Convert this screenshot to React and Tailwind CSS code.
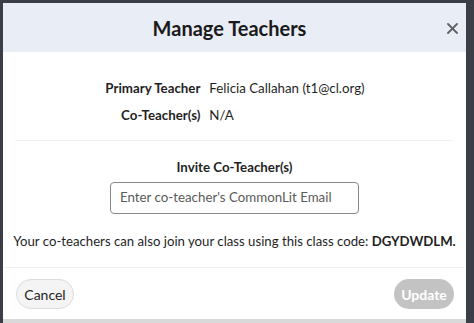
import React from "react";

export default function App() {
  return (
    <div
      className="w-[474px] h-[323px] bg-[#3b3e46] pt-[3px] pl-[3px] overflow-hidden"
      style={{ fontFamily: "Lato, 'Open Sans', sans-serif" }}
    >
      <div className="w-[463px] h-[320px] bg-white flex flex-col">
        <div className="h-[49px] bg-[#e9edf6] flex items-center justify-center relative shrink-0 pr-[10px]">
          <h1 className="text-[20px] font-bold text-[#1a1a1a] leading-none">Manage Teachers</h1>
          <svg
            className="absolute right-[8px] top-[20px]"
            width="11"
            height="11"
            viewBox="0 0 11 11"
            fill="none"
            stroke="#5f6166"
            strokeWidth="1.8"
            strokeLinecap="round"
          >
            <path d="M1 1L10 10M10 1L1 10" />
          </svg>
        </div>
        <div className="flex-1 flex flex-col">
          <div className="pt-[26px] flex justify-center">
            <div className="grid grid-cols-[auto_auto] gap-x-[9px] gap-y-[7px] text-[13.3px] leading-[20px] text-[#1f1f1f] ml-[1px]">
              <div className="text-right font-bold">Primary Teacher</div>
              <div>Felicia Callahan (t1@cl.org)</div>
              <div className="text-right font-bold">Co-Teacher(s)</div>
              <div>N/A</div>
            </div>
          </div>
          <div className="mx-[13px] mt-[15px] h-px bg-[#efefef]" />
          <div className="mt-[16px] text-center font-bold text-[13.3px] leading-[20px] text-[#1f1f1f]">
            Invite Co-Teacher(s)
          </div>
          <div className="mt-[5px] flex justify-center">
            <div className="w-[249px] h-[32px] border border-[#8a8a8a] rounded-[4px] flex items-center pl-[9px] text-[13.3px] text-[#5a5a5a]">
              Enter co-teacher's CommonLit Email
            </div>
          </div>
          <div className="mt-[17px] text-center text-[13.2px] leading-[20px] text-[#1f1f1f] whitespace-nowrap">
            Your co-teachers can also join your class using this class code: <span className="font-bold">DGYDWDLM.</span>
          </div>
          <div className="mx-[2px] mt-[16px] h-px bg-[#efefef]" />
          <div className="mt-[11px] flex justify-between pl-[13px] pr-[12px]">
            <button className="h-[30px] w-[58px] rounded-full bg-[#f4f4f4] border border-[#dcdcdc] text-[14px] text-[#1f1f1f]">
              Cancel
            </button>
            <button className="h-[30px] w-[60px] rounded-full bg-[#c3c3c3] text-[14px] text-white font-bold">
              Update
            </button>
          </div>
        </div>
        <div className="h-[4px] bg-[#d9d9d9] shrink-0" />
      </div>
    </div>
  );
}
